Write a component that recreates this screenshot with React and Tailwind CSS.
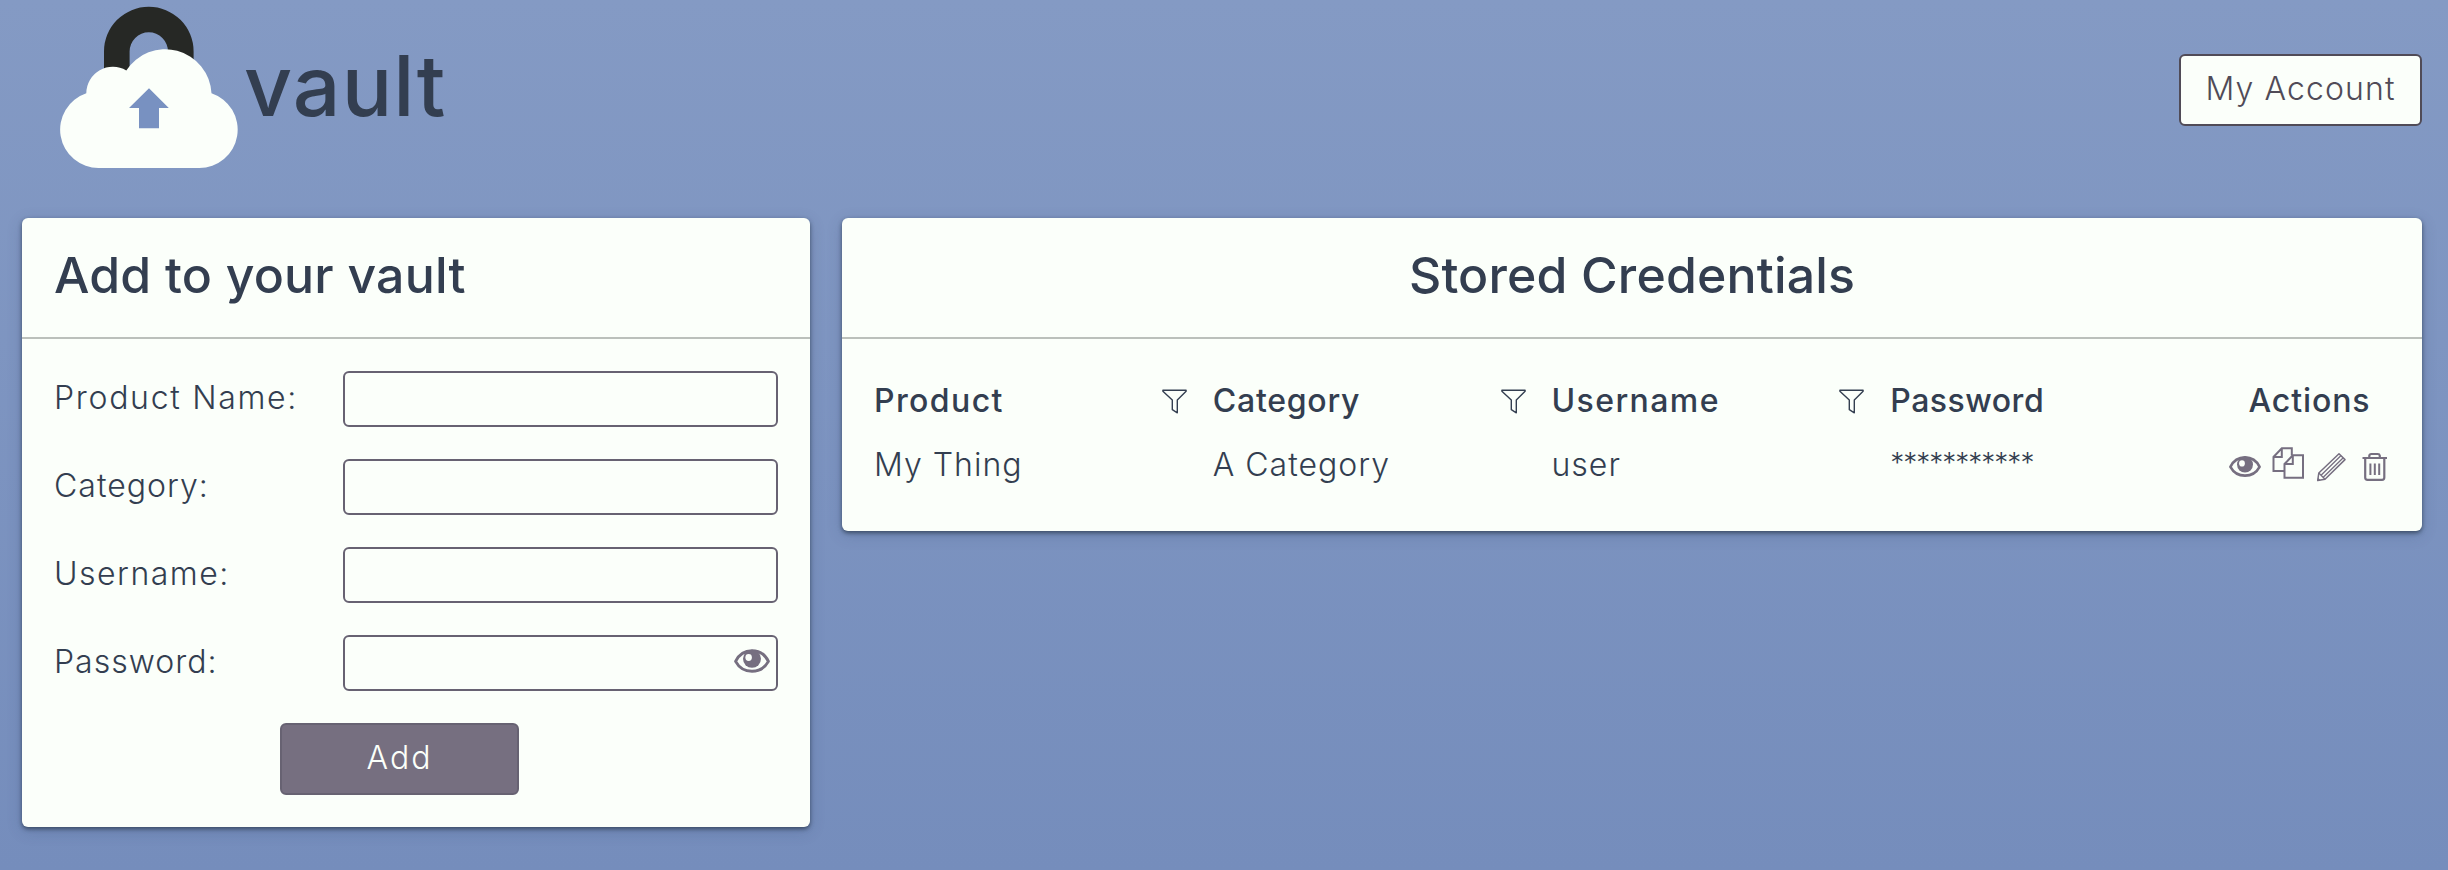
function Logo() {
  return (
    <svg className="w-[180px] h-[164px] shrink-0" viewBox="59 5 180 164">
      <path
        d="M104 80V51.500a44.800 44.800 0 0 1 89.600 0V80H168V51.500a19.200 19.200 0 0 0-38.400 0V80z"
        fill="#262825"
      />
      <path
        d="M99 168A38.400 38.400 0 0 1 86.300 93.200A26.500 26.500 0 0 1 126.300 70.500A46.300 46.300 0 0 1 211.500 93.200A38.400 38.400 0 0 1 199 168z"
        fill="#fbfffa"
      />
      <path d="M149 88.300L168.800 108H159v20.300h-20V108h-10z" fill="#7891c1" />
    </svg>
  );
}

function EyeIcon({ className }) {
  return (
    <svg className={className} viewBox="0 0 32 21" fill="none">
      <path
        d="M1.400 10.800C4.500 4.600 9.800 1.400 16 1.400s11.500 3.200 14.600 9.400C27.500 16.500 22.200 19.600 16 19.600S4.500 16.500 1.400 10.800z"
        stroke="#766f80"
        strokeWidth="2.6"
        strokeLinejoin="round"
      />
      <circle cx="16" cy="8.6" r="8" fill="#766f80" />
      <ellipse cx="13" cy="7.4" rx="2.9" ry="3.1" fill="#fbfffa" />
    </svg>
  );
}

function CopyIcon() {
  return (
    <svg className="ml-[11px] mb-1 w-8 h-8" viewBox="0 0 32 32" fill="none" stroke="#766f80" strokeWidth="2">
      <path d="M12.500 24H1.500V10L9.800 1.300H19.800V8.500M1.500 10H9.800V1.300" />
      <path d="M12.500 17L20.800 8.300H31V30.700H12.500zM12.500 17H20.800V8.300" />
    </svg>
  );
}

function PencilIcon() {
  return (
    <svg className="ml-3 mt-[3px] w-[30px] h-[30px]" viewBox="0 0 30 30" fill="none" stroke="#766f80" strokeWidth="1.5">
      <path d="M23 1.700L29 7.600L9 27.200L1.700 28.600L2.800 21z" strokeLinejoin="round" />
      <path d="M24.800 3.800L4.800 23.500M27 6L7 25.500M2.800 21L9 27.200" strokeWidth="1.3" />
      <path d="M1.400 28.900L2 25.800L4.600 28.300z" fill="#766f80" stroke="none" />
    </svg>
  );
}

function TrashIcon() {
  return (
    <svg className="ml-4 mt-[3px] w-[26px] h-[30px]" viewBox="0 0 26 30" fill="none" stroke="#766f80" strokeWidth="2.2">
      <path d="M.5 6H25M7.300 6V3.600Q7.500 2 9.300 2h6.500Q17.500 2 17.800 3.600V6M3.200 6V25.500Q3.200 27.800 5.500 27.800H20Q22.300 27.800 22.300 25.500V6" />
      <path d="M8.400 11.500V23M12.800 11.500V23M17.200 11.500V23" strokeWidth="2" />
    </svg>
  );
}

function FunnelIcon() {
  return (
    <svg className="w-[25px] h-[25px]" viewBox="0 0 25 25" fill="none" stroke="#333e50" strokeWidth="1.4">
      <path d="M.9 1.200H24.100V2.200L15.300 11V23.800L10.300 20.700V11L.9 2.200z" strokeLinejoin="round" />
    </svg>
  );
}

function Card({ title, className, titleClass, children }) {
  return (
    <section
      className={`rounded-[6px] bg-[#fbfffa] shadow-[0_2px_4px_rgba(30,45,60,0.65),0_4px_16px_rgba(40,60,100,0.2)] ${className}`}
    >
      <h2
        className={`flex h-[121px] items-center border-b-2 border-[#bbc0bb] px-8 pb-[5px] text-[50px] leading-none font-medium ${titleClass}`}
      >
        {title}
      </h2>
      {children}
    </section>
  );
}

const fields = [
  { label: "Product Name:", tracking: "tracking-[1.7px]" },
  { label: "Category:", tracking: "tracking-[1px]" },
  { label: "Username:", tracking: "tracking-[1.5px]" },
  { label: "Password:", tracking: "tracking-[1px]", eye: true },
];

const columns = [
  { label: "Product", tracking: "tracking-[1.4px]", filter: true },
  { label: "Category", tracking: "tracking-[0.75px]", filter: true },
  { label: "Username", tracking: "tracking-[1.4px]", filter: true },
  { label: "Password", tracking: "tracking-[0.5px]" },
];

export default function App() {
  return (
    <div className="h-[870px] w-full overflow-hidden bg-linear-to-b from-[#849ac4] to-[#758dbc] font-['Inter','Liberation_Sans',sans-serif] text-[32px] leading-none font-light text-[#333e50]">
      <header className="flex h-[218px] items-start justify-between pr-[26px] pl-[59px]">
        <div className="flex pt-[5px]">
          <Logo />
          <h1 className="mt-[39px] ml-[5px] text-[84px] leading-[84px] font-medium tracking-[1.1px]">vault</h1>
        </div>
        <button className="mt-[54px] h-[72px] w-[243px] rounded-[6px] border-2 border-[#504b57] bg-[#fbfffa] pb-[3px] font-light tracking-[1.1px] text-[#504b57]">
          My Account
        </button>
      </header>

      <main className="flex items-start gap-8 px-[22px]">
        <Card title="Add to your vault" className="h-[609px] w-[788px]" titleClass="tracking-[0.2px]">
          <form className="flex flex-col gap-8 px-8 pt-8">
            {fields.map((f) => (
              <div key={f.label} className="flex h-14 items-center justify-between">
                <label className={`pb-[3px] ${f.tracking}`}>{f.label}</label>
                <div className="flex h-14 w-[435px] items-center justify-end rounded-[6px] border-2 border-[#676272] pr-[6px] pb-[5px]">
                  {f.eye && <EyeIcon className="h-6 w-9" />}
                </div>
              </div>
            ))}
            <button
              type="button"
              className="ml-[226px] h-[72px] w-[239px] rounded-[6px] border-2 border-[#676272] bg-[#766f80] pb-[3px] font-light tracking-[2px] text-[#fbfffa]"
            >
              Add
            </button>
          </form>
        </Card>

        <Card title="Stored Credentials" className="h-[313px] w-[1580px]" titleClass="justify-center tracking-[0.15px]">
          <div className="px-8 pt-[30px]">
            <div className="grid h-16 grid-cols-[repeat(4,1fr)_161px] items-center font-medium">
              {columns.map((c) => (
                <div key={c.label} className="flex items-center justify-between pr-[26px]">
                  <span className={c.tracking}>{c.label}</span>
                  {c.filter && <FunnelIcon />}
                </div>
              ))}
              <div className="text-center tracking-[0.9px]">Actions</div>
            </div>
            <div className="grid h-16 grid-cols-[repeat(4,1fr)_161px] items-center tracking-[1px]">
              <div>My Thing</div>
              <div>A Category</div>
              <div>user</div>
              <div className="pb-1 text-[28px] tracking-[-1px]">***********</div>
              <div className="flex items-center">
                <EyeIcon className="mt-[3px] h-[21px] w-8" />
                <CopyIcon />
                <PencilIcon />
                <TrashIcon />
              </div>
            </div>
          </div>
        </Card>
      </main>
    </div>
  );
}
